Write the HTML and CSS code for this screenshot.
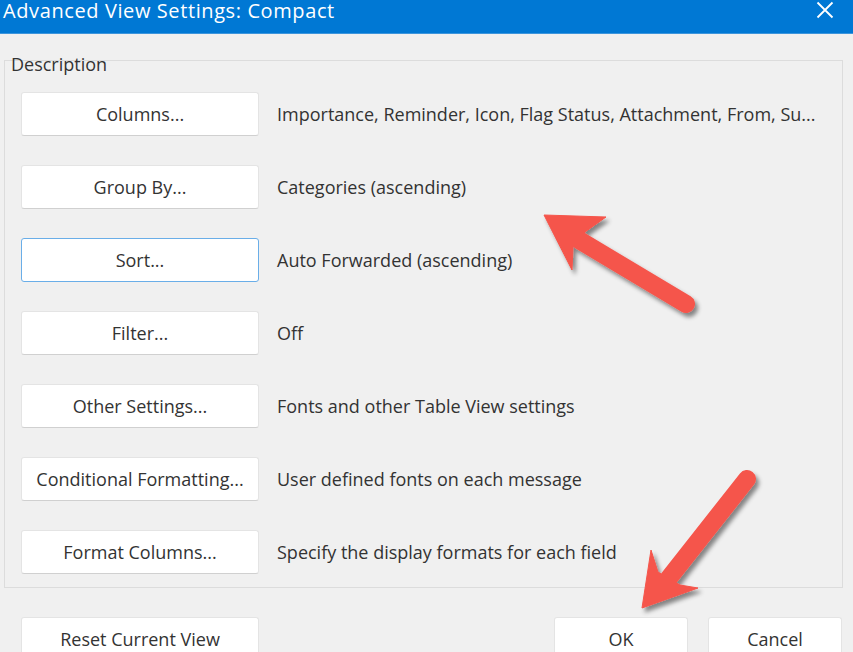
FILE: index.html
```html
<!DOCTYPE html>
<html>
<head>
<meta charset="utf-8">
<link rel="stylesheet" href="styles.css">
</head>
<body>
<div class="dialog">
  <div class="titlebar">
    <span class="title">Advanced View Settings: Compact</span>
    <svg class="close" width="18" height="18" viewBox="0 0 18 18"><path d="M1.5 1.5 L16.5 16.5 M16.5 1.5 L1.5 16.5" stroke="#fff" stroke-width="1.8" fill="none"/></svg>
  </div>
  <div class="body">
    <div class="group">
      <div class="legend">Description</div>
      <div class="rows">
        <div class="row"><div class="btn">Columns...</div><div class="desc">Importance, Reminder, Icon, Flag Status, Attachment, From, Su...</div></div>
        <div class="row"><div class="btn">Group By...</div><div class="desc">Categories (ascending)</div></div>
        <div class="row"><div class="btn focus">Sort...</div><div class="desc">Auto Forwarded (ascending)</div></div>
        <div class="row"><div class="btn">Filter...</div><div class="desc">Off</div></div>
        <div class="row"><div class="btn">Other Settings...</div><div class="desc">Fonts and other Table View settings</div></div>
        <div class="row"><div class="btn">Conditional Formatting...</div><div class="desc">User defined fonts on each message</div></div>
        <div class="row"><div class="btn">Format Columns...</div><div class="desc">Specify the display formats for each field</div></div>
      </div>
    </div>
    <div class="footer">
      <div class="btn">Reset Current View</div>
      <div class="spacer"></div>
      <div class="btn small">OK</div>
      <div class="btn small">Cancel</div>
    </div>
  </div>
  <svg class="arrows" width="853" height="652" viewBox="0 0 853 652">
    <defs>
      <filter id="sh" x="-20%" y="-20%" width="140%" height="140%">
        <feDropShadow dx="3" dy="4" stdDeviation="2" flood-color="#000" flood-opacity="0.45"/>
      </filter>
    </defs>
    <g filter="url(#sh)" fill="#f5554b" stroke="#f5554b">
      <path d="M579 240 L686 304" stroke-width="18" stroke-linecap="round" fill="none"/>
      <polygon points="544,215 606,217 585,232 573,247 572,270" stroke-width="1"/>
    </g>
    <g filter="url(#sh)" fill="#f5554b" stroke="#f5554b">
      <path d="M669 578 L747 479" stroke-width="18" stroke-linecap="round" fill="none"/>
      <polygon points="642,608 651,550 658,572 680,585 698,588" stroke-width="1"/>
    </g>
  </svg>
</div>
</body>
</html>
```
FILE: styles.css
```css
html, body {
  margin: 0;
  padding: 0;
  width: 853px;
  height: 652px;
  overflow: hidden;
  background: #f0f0f0;
  font-family: "Open Sans", "Noto Sans", sans-serif;
  color: #333;
}
.dialog {
  position: relative;
  width: 853px;
  height: 652px;
}
.titlebar {
  height: 34px;
  background: #0078d4;
  border-bottom: 1px solid #3c95dc;
  display: flex;
  align-items: flex-start;
  justify-content: space-between;
  padding: 0 19px 0 3px;
  box-sizing: border-box;
}
.title {
  color: #fff;
  font-size: 20px;
  letter-spacing: 0.6px;
  white-space: nowrap;
  line-height: 22px;
}
.close {
  margin-top: 1px;
}
.body {
  padding: 26px 10px 0 4px;
}
.group {
  border: 1px solid #dcdcdc;
  height: 528px;
  box-sizing: border-box;
  padding: 0 0 0 16px;
}
.legend {
  font-size: 18px;
  margin: -9px 0 0 -10px;
  line-height: 24px;
}
.rows {
  display: flex;
  flex-direction: column;
  gap: 29px;
  margin-top: 16px;
}
.row {
  display: flex;
  align-items: center;
  gap: 18px;
}
.btn {
  width: 238px;
  height: 44px;
  box-sizing: border-box;
  background: #fff;
  border: 1px solid #e4e4e4;
  border-bottom-color: #d0d0d0;
  border-radius: 3px;
  display: flex;
  align-items: center;
  justify-content: center;
  font-size: 18px;
  color: #333;
  white-space: nowrap;
}
.btn.focus {
  border: 1px solid #6aaee8;
}
.desc {
  font-size: 18px;
  white-space: nowrap;
  color: #333;
}
.footer {
  display: flex;
  margin-top: 29px;
  padding-left: 17px;
  padding-right: 1px;
  gap: 20px;
}
.spacer {
  flex: 1;
}
.btn.small {
  width: 134px;
}
.arrows {
  position: absolute;
  left: 0;
  top: 0;
  pointer-events: none;
}
```
